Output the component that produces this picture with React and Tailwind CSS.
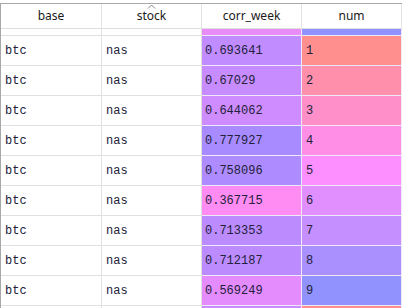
import React from "react";

const rows = [
  { b: "", s: "", c: "", n: "", cc: "#e98cf7", nc: "#9191ff", h: "h-[7px]" },
  { b: "btc", s: "nas", c: "0.693641", n: "1", cc: "#c08cff", nc: "#ff8f8f", h: "h-[30px]" },
  { b: "btc", s: "nas", c: "0.67029", n: "2", cc: "#c78cff", nc: "#ff8fab", h: "h-[30px]" },
  { b: "btc", s: "nas", c: "0.644062", n: "3", cc: "#cf8cff", nc: "#ff8fc8", h: "h-[30px]" },
  { b: "btc", s: "nas", c: "0.777927", n: "4", cc: "#a88cff", nc: "#ff8fe6", h: "h-[30px]" },
  { b: "btc", s: "nas", c: "0.758096", n: "5", cc: "#ae8cff", nc: "#fd8fff", h: "h-[30px]" },
  { b: "btc", s: "nas", c: "0.367715", n: "6", cc: "#ff8cf3", nc: "#e18fff", h: "h-[30px]" },
  { b: "btc", s: "nas", c: "0.713353", n: "7", cc: "#bc8cff", nc: "#c68fff", h: "h-[30px]" },
  { b: "btc", s: "nas", c: "0.712187", n: "8", cc: "#bc8cff", nc: "#aa8fff", h: "h-[30px]" },
  { b: "btc", s: "nas", c: "0.569249", n: "9", cc: "#e48cfd", nc: "#9292ff", h: "h-[30px]" },
  { b: "", s: "", c: "", n: "", cc: "#c88cff", nc: "#ff8f8f", h: "h-[30px]" },
];

const mono = { fontFamily: '"Liberation Mono", "DejaVu Sans Mono", monospace' };

export default function App() {
  return (
    <div className="w-[403px] h-[308px] overflow-hidden bg-white pt-[3px]">
      <div className="w-[402px] border-l border-t border-[#a8a8a8]">
        <div
          className="flex h-[25px] border-b border-[#dedede] text-[12px] text-[#1a1a1a]"
          style={{ fontFamily: '"Noto Sans", "Open Sans", sans-serif' }}
        >
          <div className="w-[101px] border-r border-[#e3e3e3] flex items-center justify-center">base</div>
          <div className="relative w-[100px] border-r border-[#e3e3e3] flex items-center justify-center">
            <svg className="absolute left-[45px] top-0" width="9" height="5" viewBox="0 0 9 5">
              <polyline points="1,4.5 4.5,1 8,4.5" fill="none" stroke="#777" strokeWidth="0.9" />
            </svg>
            stock
          </div>
          <div className="w-[100px] border-r border-[#e3e3e3] flex items-center justify-center">corr_week</div>
          <div className="w-[100px] border-r border-[#e3e3e3] flex items-center justify-center">num</div>
        </div>
        {rows.map((r, i) => (
          <div key={i} className={`flex ${r.h} text-[12px] text-[#22203a]`} style={mono}>
            <div className="w-[101px] border-r border-b border-[#e0e0e0] flex items-center pl-[4px]">{r.b}</div>
            <div className="w-[100px] border-r border-b border-[#e0e0e0] flex items-center pl-[4px]">{r.s}</div>
            <div
              className="w-[100px] border-r border-b border-[#efeaf5] flex items-center pl-[3px]"
              style={{ backgroundColor: r.cc }}
            >
              {r.c}
            </div>
            <div
              className="w-[100px] border-r border-b border-[#efeaf5] flex items-center pl-[4px]"
              style={{ backgroundColor: r.nc }}
            >
              {r.n}
            </div>
          </div>
        ))}
      </div>
    </div>
  );
}
